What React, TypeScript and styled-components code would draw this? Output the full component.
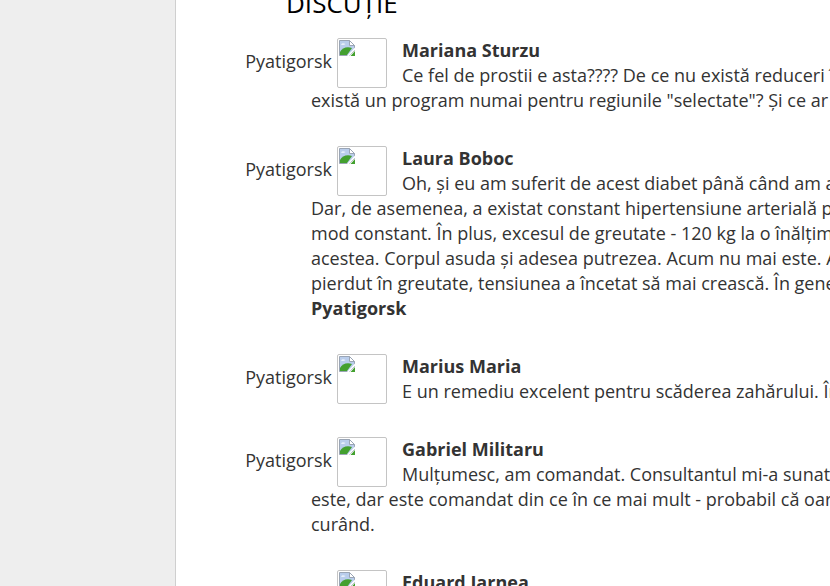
import styled, { createGlobalStyle } from "styled-components";

const GlobalStyle = createGlobalStyle`
  html, body {
    margin: 0;
    padding: 0;
    height: 100%;
    overflow: hidden;
    background: #fff;
  }
`;

const Page = styled.div`
  display: flex;
  width: 830px;
  height: 586px;
  overflow: hidden;
  font-family: "Open Sans", "Noto Sans", sans-serif;
  font-size: 18px;
  line-height: 25px;
  color: #333;
`;

const Sidebar = styled.aside`
  flex: 0 0 175px;
  background: #eeeeee;
  border-right: 1px solid #cfcfcf;
`;

const Main = styled.main`
  flex: 1 0 auto;
  width: 1000px;
`;

const Title = styled.h2`
  margin: -15px 0 0 110px;
  height: 53px;
  font-size: 26px;
  line-height: 36px;
  font-weight: 400;
  color: #000;
`;

const CommentList = styled.div`
  display: flex;
  flex-direction: column;
  gap: 33px;
  margin-left: 135px;
`;

const Comment = styled.article`
  display: flow-root;
  width: 900px;
`;

const Meta = styled.div`
  float: left;
  display: flex;
  align-items: center;
  justify-content: flex-end;
  gap: 5px;
  width: 76px;
  height: 50px;
  margin-right: 15px;
`;

const City = styled.span`
  flex: none;
  padding-bottom: 4px;
`;

const Avatar = styled.div`
  flex: none;
  box-sizing: border-box;
  width: 50px;
  height: 50px;
  padding: 1px;
  border: 1px solid #c4c4c4;
  border-radius: 2px;
  background: #fff;
`;

const Name = styled.div`
  font-weight: 700;
`;

const Line = styled.div`
  white-space: nowrap;
`;

const BrokenImage = () => (
  <svg width="16" height="16" viewBox="0 0 16 16" style={{ display: "block" }}>
    <path d="M.5.500h10l5 5v5l-5 5H.500z" fill="#b9cdec" stroke="#9aa5b5" strokeWidth="1" />
    <path d="M2 4.500c1-1.500 3-1.500 4.500-.500-1 1-3.500 1.500-4.500 .500z" fill="#e8f0fb" />
    <path d="M1 15v-3C3 8 8 6 13 8L8 15z" fill="#43a02f" />
    <path d="M10.500.500v5h5z" fill="#fff" stroke="#9aa5b5" strokeWidth="1" strokeLinejoin="round" />
    <path d="M16 11l-4.500 5H16z" fill="#43a02f" />
    <path d="M8.500 16.500L16.500 8" stroke="#fff" strokeWidth="1.500" />
  </svg>
);

type CommentData = { name: string; lines: string[]; city?: boolean; boldLast?: string };

const comments: CommentData[] = [
  {
    name: "Mariana Sturzu",
    lines: [
      "Ce fel de prostii e asta???? De ce nu există reduceri în",
      'există un program numai pentru regiunile "selectate"? Și ce ar',
    ],
  },
  {
    name: "Laura Boboc",
    lines: [
      "Oh, și eu am suferit de acest diabet până când am a",
      "Dar, de asemenea, a existat constant hipertensiune arterială p",
      "mod constant. În plus, excesul de greutate - 120 kg la o înălțim",
      "acestea. Corpul asuda și adesea putrezea. Acum nu mai este. A",
      "pierdut în greutate, tensiunea a încetat să mai crească. În gene",
    ],
    boldLast: "Pyatigorsk",
  },
  {
    name: "Marius Maria",
    lines: ["E un remediu excelent pentru scăderea zahărului. În"],
  },
  {
    name: "Gabriel Militaru",
    lines: [
      "Mulțumesc, am comandat. Consultantul mi-a sunat",
      "este, dar este comandat din ce în ce mai mult - probabil că oar",
      "curând.",
    ],
  },
  {
    name: "Eduard Iarnea",
    lines: [],
    city: false,
  },
];

const App = () => (
  <Page>
    <GlobalStyle />
    <Sidebar />
    <Main>
      <Title>DISCUȚIE</Title>
      <CommentList>
        {comments.map((comment) => (
          <Comment key={comment.name}>
            <Meta>
              {comment.city !== false && <City>Pyatigorsk</City>}
              <Avatar>
                <BrokenImage />
              </Avatar>
            </Meta>
            <Name>{comment.name}</Name>
            {comment.lines.map((line) => (
              <Line key={line}>{line}</Line>
            ))}
            {comment.boldLast && <Name>{comment.boldLast}</Name>}
          </Comment>
        ))}
      </CommentList>
    </Main>
  </Page>
);

export default App;
